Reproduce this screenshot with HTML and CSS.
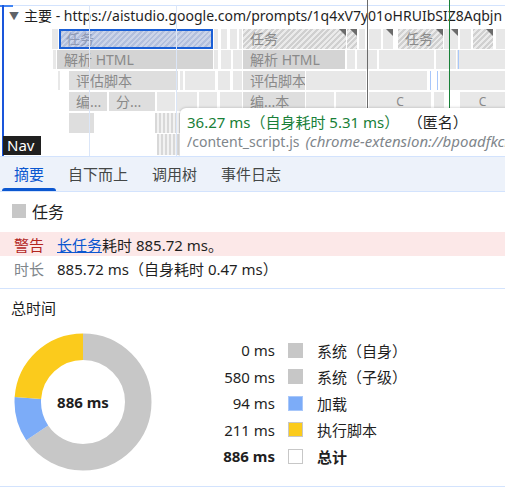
FILE: index.html
```html
<!DOCTYPE html>
<html lang="zh">
<head>
<meta charset="utf-8">
<link rel="stylesheet" href="styles.css">
</head>
<body>
<div class="flame">
  <div class="topline"><span class="topmark"></span></div>
  <div class="track-head"><span class="tri">▼</span>主要 - https://aistudio.google.com/prompts/1q4xV7y01oHRUIbSIZ8Aqbjn</div>
  <div class="canvas">
    <div class="grid" style="left:89px"></div>
    <div class="grid" style="left:176px"></div>

    <!-- row 1 -->
    <div class="b lt" style="left:52px;top:29px;width:6px;height:20px"></div>
    <div class="b hatch sel" style="left:59px;top:29px;width:154px;height:20px"><span>任务</span></div>
    <div class="b lt" style="left:214px;top:29px;width:4px;height:20px"></div>
    <div class="b lt" style="left:221px;top:29px;width:6px;height:20px"></div>
    <div class="b lt" style="left:230px;top:29px;width:7px;height:20px"></div>
    <div class="b lt" style="left:239px;top:29px;width:3px;height:20px"></div>
    <div class="b hatch tr" style="left:243px;top:29px;width:103px;height:20px"><span>任务</span></div>
    <div class="b hatch tr" style="left:347px;top:29px;width:10px;height:20px"></div>
    <div class="b lt" style="left:359px;top:29px;width:6px;height:20px"></div>
    <div class="b lt" style="left:369px;top:29px;width:12px;height:20px"></div>
    <div class="b lt tr" style="left:383px;top:29px;width:10px;height:20px"></div>
    <div class="b hatch tr" style="left:398px;top:29px;width:45px;height:20px"><span>任务</span></div>
    <div class="b lt" style="left:444px;top:29px;width:5px;height:20px"></div>
    <div class="b lt tr" style="left:450px;top:29px;width:8px;height:20px"></div>
    <div class="b lt" style="left:460px;top:29px;width:11px;height:20px"></div>
    <div class="b hatch tr" style="left:473px;top:29px;width:20px;height:20px"></div>
    <div class="b lt" style="left:496px;top:29px;width:9px;height:20px"></div>

    <!-- row 2 -->
    <div class="b lt" style="left:53px;top:50px;width:3px;height:19px"></div>
    <div class="b dk" style="left:57px;top:50px;width:156px;height:19px"><span>解析 HTML</span></div>
    <div class="b lt" style="left:214px;top:50px;width:4px;height:19px"></div>
    <div class="b lt" style="left:221px;top:50px;width:10px;height:19px"></div>
    <div class="b lt" style="left:233px;top:50px;width:9px;height:19px"></div>
    <div class="b dk" style="left:243px;top:50px;width:102px;height:19px"><span>解析 HTML</span></div>
    <div class="b lt" style="left:347px;top:50px;width:8px;height:19px"></div>
    <div class="b lt" style="left:357px;top:50px;width:20px;height:19px"></div>
    <div class="b lt" style="left:379px;top:50px;width:55px;height:19px"></div>
    <div class="b lt" style="left:436px;top:50px;width:20px;height:19px"></div>
    <div class="b lt" style="left:457px;top:50px;width:48px;height:19px"></div>
    <div class="bl" style="left:458px;top:50px;height:19px"></div>

    <!-- row 3 -->
    <div class="b lt" style="left:58px;top:71px;width:2px;height:19px"></div>
    <div class="b md" style="left:69px;top:71px;width:109px;height:19px"><span>评估脚本</span></div>
    <div class="b lt" style="left:180px;top:71px;width:3px;height:19px"></div>
    <div class="b lt" style="left:185px;top:71px;width:30px;height:19px"></div>
    <div class="b lt" style="left:218px;top:71px;width:12px;height:19px"></div>
    <div class="b lt" style="left:233px;top:71px;width:9px;height:19px"></div>
    <div class="b md" style="left:243px;top:71px;width:62px;height:19px"><span>评估脚本</span></div>
    <div class="b lt" style="left:306px;top:71px;width:60px;height:19px"></div>
    <div class="b lt" style="left:369px;top:71px;width:58px;height:19px"></div>
    <div class="b lt" style="left:440px;top:71px;width:65px;height:19px"></div>
    <div class="bl" style="left:430px;top:71px;height:19px"></div>
    <div class="bl" style="left:437px;top:71px;height:19px"></div>

    <!-- row 4 -->
    <div class="b md" style="left:69px;top:92px;width:38px;height:19px"><span>编...</span></div>
    <div class="b md" style="left:109px;top:92px;width:46px;height:19px"><span>分...</span></div>
    <div class="b lt" style="left:157px;top:92px;width:18px;height:19px"></div>
    <div class="b lt" style="left:177px;top:92px;width:20px;height:19px"></div>
    <div class="b lt" style="left:199px;top:92px;width:18px;height:19px"></div>
    <div class="b lt" style="left:220px;top:92px;width:22px;height:19px"></div>
    <div class="b md" style="left:243px;top:92px;width:62px;height:19px"><span>编...本</span></div>
    <div class="b lt" style="left:306px;top:92px;width:28px;height:19px"></div>
    <div class="b lt" style="left:336px;top:92px;width:30px;height:19px"></div>
    <div class="b lt" style="left:369px;top:92px;width:62px;height:19px"><span class="c">C</span></div>
    <div class="b lt" style="left:434px;top:92px;width:10px;height:19px"></div>
    <div class="b lt" style="left:460px;top:92px;width:45px;height:19px"><span class="c">C</span></div>

    <!-- row 5 -->
    <div class="b md" style="left:69px;top:113px;width:25px;height:20px"></div>
    <div class="b stripe" style="left:155px;top:113px;width:26px;height:20px"></div>
    <!-- row 6 -->
    <div class="b stripe" style="left:157px;top:134px;width:24px;height:21px"></div>

    <div class="vline gray" style="left:367px"></div>
    <div class="vline green" style="left:449px"></div>

    <div class="nav">Nav</div>

    <div class="tooltip">
      <div class="tt-line1"><span class="tt-time">36.27 ms（自身耗时 5.31 ms）</span><span class="tt-name">（匿名）</span></div>
      <div class="tt-line2"><span class="tt-file">/content_script.js</span><span class="tt-url">(chrome-extension://bpoadfkcbjbfhfodiogcnhhhpibjhbnh/</span></div>
    </div>
  </div>
</div>

<div class="tabs">
  <div class="tab active">摘要</div>
  <div class="tab">自下而上</div>
  <div class="tab">调用树</div>
  <div class="tab">事件日志</div>
</div>

<div class="details">
  <div class="title"><span class="swatch"></span>任务</div>
  <div class="row warn"><span class="key red">警告</span><span><a class="link">长任务</a>耗时 885.72 ms。</span></div>
  <div class="row"><span class="key">时长</span><span>885.72 ms（自身耗时 0.47 ms）</span></div>
</div>

<div class="summary">
  <div class="sum-title">总时间</div>
  <div class="sum-body">
    <div class="donut">
      <svg width="140" height="140" viewBox="0 0 140 140">
        <g transform="rotate(-90 70 70)">
          <circle cx="70" cy="70" r="55.25" fill="none" stroke="#c7c7c7" stroke-width="26.5" stroke-dasharray="227.2 400" stroke-dashoffset="0"></circle>
          <circle cx="70" cy="70" r="55.25" fill="none" stroke="#7cacf8" stroke-width="26.5" stroke-dasharray="36.8 400" stroke-dashoffset="-227.2"></circle>
          <circle cx="70" cy="70" r="55.25" fill="none" stroke="#fbcb1c" stroke-width="26.5" stroke-dasharray="83.1 400" stroke-dashoffset="-264"></circle>
        </g>
      </svg>
      <div class="donut-label">886 ms</div>
    </div>
    <div class="legend">
      <div class="val">0 ms</div><div class="sq gray"></div><div class="lab">系统（自身）</div>
      <div class="val">580 ms</div><div class="sq gray"></div><div class="lab">系统（子级）</div>
      <div class="val">94 ms</div><div class="sq blue"></div><div class="lab">加载</div>
      <div class="val">211 ms</div><div class="sq yellow"></div><div class="lab">执行脚本</div>
      <div class="val bold">886 ms</div><div class="sq white"></div><div class="lab bold">总计</div>
    </div>
  </div>
</div>
</body>
</html>
```

FILE: styles.css
```css
* { box-sizing: border-box; }
html, body { margin: 0; padding: 0; background: #fff; }
body {
  width: 505px;
  height: 497px;
  overflow: hidden;
  font-family: "Noto Sans", "Noto Sans CJK SC", sans-serif;
  color: #1f1f1f;
  font-size: 15px;
}

/* ---------- flame chart ---------- */
.flame {
  position: relative;
  height: 156px;
  overflow: hidden;
}
.topline {
  position: absolute;
  left: 0; right: 0; top: 5px;
  height: 1px;
  background: #d3e3fd;
}
.topmark {
  position: absolute;
  left: 0; top: 0;
  width: 13px; height: 2px;
  background: #4285f4;
}
.flame::before {
  content: "";
  position: absolute;
  left: 2px; top: 5px; bottom: 0;
  width: 2px;
  background: #1a56db;
  z-index: 3;
}
.track-head {
  padding: 7px 0 0 9px;
  height: 28px;
  white-space: nowrap;
  font-size: 14px;
  line-height: 18px;
  color: #1f1f1f;
}
.tri {
  font-size: 10px;
  color: #5f6368;
  margin-right: 5px;
  position: relative;
  top: -1px;
}
.canvas {
  position: absolute;
  left: 0; top: 0; right: 0; bottom: 0;
}
.grid {
  position: absolute;
  top: 5px; bottom: 0;
  width: 1px;
  background: #dbe6f8;
  z-index: 2;
}
.b {
  position: absolute;
  overflow: hidden;
  white-space: nowrap;
  font-size: 14px;
  line-height: 19px;
  color: #8a8a8a;
}
.b span { padding-left: 7px; }
.b .c { padding-left: 0; display: block; text-align: center; font-size: 12px; color: #8a8a8a; }
.lt { background: #e8e8e8; }
.md { background: #dedede; }
.dk { background: #d4d4d4; }
.stripe {
  background: repeating-linear-gradient(90deg, #d8d8d8 0 2px, #f2f2f2 2px 4px);
}
.hatch {
  background: repeating-linear-gradient(135deg, #d0d0d0 0 2px, #ebebeb 2px 4px);
}
.sel {
  background: repeating-linear-gradient(135deg, #b3bfdc 0 2px, #ccd4e8 2px 4px);
  border: 2px solid #1a5fd6;
  color: #8f9ab5;
  line-height: 16px;
}
.sel span { padding-left: 5px; }
.tr::after {
  content: "";
  position: absolute;
  right: 0; top: 0;
  border-style: solid;
  border-width: 0 7px 7px 0;
  border-color: transparent #6b6b6b transparent transparent;
}
.bl {
  position: absolute;
  width: 1px;
  background: #a8c7fa;
}
.vline {
  position: absolute;
  top: 0;
  height: 108px;
  width: 1px;
}
.vline.gray { background: #6b6b6b; }
.vline.green { background: #188038; height: 156px; }

.nav {
  position: absolute;
  left: 3px; top: 136px;
  width: 38px; height: 19px;
  background: #1f1f1f;
  color: #fff;
  font-size: 15px;
  line-height: 19px;
  padding-left: 4px;
  z-index: 4;
}
.tooltip {
  position: absolute;
  left: 180px; top: 108px;
  width: 360px; height: 52px;
  background: #fff;
  border-radius: 6px 0 0 0;
  box-shadow: 0 0 3px rgba(0,0,0,0.25);
  padding: 5px 0 0 7px;
  white-space: nowrap;
  z-index: 5;
  font-size: 15px;
  line-height: 19px;
}
.tt-time { color: #188038; }
.tt-name { color: #1f1f1f; margin-left: 16px; }
.tt-file { color: #80868b; font-size: 14px; }
.tt-url { color: #80868b; font-style: italic; margin-left: 6px; }

/* ---------- tabs ---------- */
.tabs {
  display: flex;
  height: 36px;
  background: #edf2fa;
  border-top: 1px solid #d3e3fd;
  border-bottom: 1px solid #d3e3fd;
  padding-left: 2px;
}
.tab {
  height: 34px;
  line-height: 34px;
  padding: 0 12px;
  color: #444746;
  font-size: 15px;
}
.tab.active {
  color: #0b57d0;
  position: relative;
}
.tab.active::after {
  content: "";
  position: absolute;
  left: 0; right: 0; bottom: 0;
  height: 3px;
  background: #0b57d0;
  border-radius: 3px 3px 0 0;
}

/* ---------- details ---------- */
.details {
  padding-top: 8px;
  border-bottom: 1px solid #d3e3fd;
  padding-bottom: 8px;
}
.title {
  display: flex;
  align-items: center;
  padding-left: 12px;
  font-size: 16px;
  height: 22px;
  margin-bottom: 10px;
}
.swatch {
  width: 14px; height: 14px;
  background: #c7c7c7;
  margin-right: 6px;
}
.row {
  display: flex;
  height: 24px;
  align-items: center;
  padding-left: 14px;
  font-size: 15px;
  white-space: nowrap;
}
.row.warn { background: #fce8e8; }
.key { width: 43px; color: #80868b; }
.key.red { color: #b3261e; }
.link { color: #0b57d0; text-decoration: underline; }

/* ---------- summary ---------- */
.summary {
  padding-top: 10px;
  height: 198px;
  border-bottom: 1px solid #d3e3fd;
}
.sum-title {
  padding-left: 11px;
  font-size: 15px;
  line-height: 18px;
  color: #1f1f1f;
}
.sum-body {
  display: flex;
  margin-top: 15px;
}
.donut {
  position: relative;
  width: 140px; height: 140px;
  margin-left: 13px;
}
.donut svg { display: block; }
.donut-label {
  position: absolute;
  left: 0; top: 0; right: 0; bottom: 0;
  display: flex;
  align-items: center;
  justify-content: center;
  font-weight: 700;
  font-size: 15px;
  color: #1f1f1f;
}
.legend {
  display: grid;
  grid-template-columns: 70px 15px auto;
  grid-auto-rows: 26.5px;
  column-gap: 13px;
  align-items: center;
  margin-left: 52px;
  margin-top: 5px;
  font-size: 15px;
}
.val { text-align: right; white-space: nowrap; }
.bold { font-weight: 700; }
.lab { white-space: nowrap; margin-left: 1px; }
.sq { width: 15px; height: 15px; border: 1px solid #c7c7c7; }
.sq.gray { background: #c7c7c7; }
.sq.blue { background: #7cacf8; border-color: #a8c7fa; }
.sq.yellow { background: #fbcb1c; border-color: #c7c7c7; }
.sq.white { background: #fff; }
```
